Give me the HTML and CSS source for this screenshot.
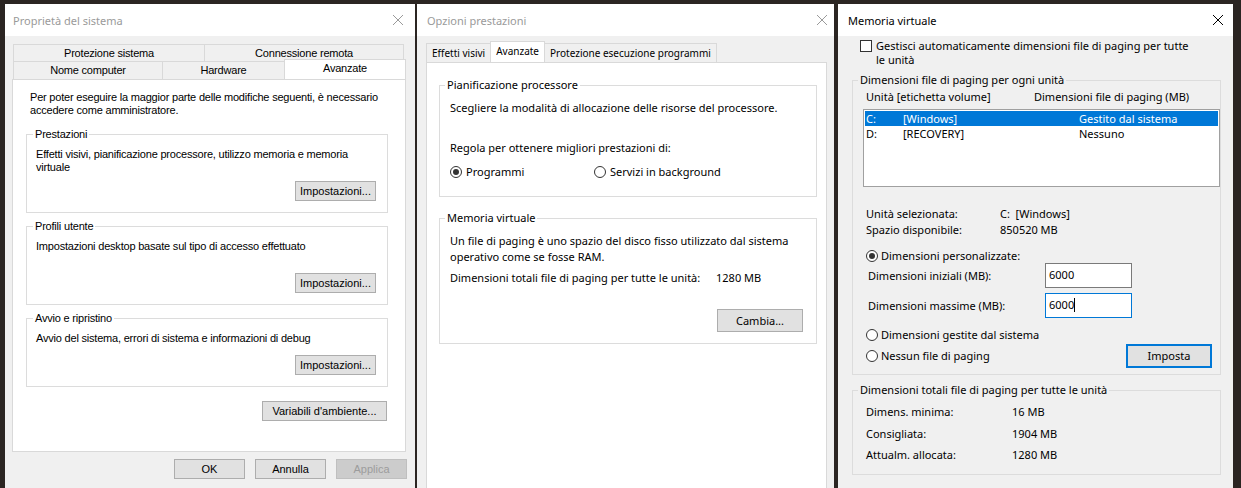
FILE: index.html
```html
<!DOCTYPE html>
<html lang="it">
  <head>
    <meta charset="UTF-8" />
    <title>Memoria virtuale</title>
    <link rel="stylesheet" href="styles.css">
  </head>
  <body>
    <div class="desktop">

      <!-- Proprietà del sistema -->
      <div class="window win-sys">
        <div class="titlebar">
          <span>Proprietà del sistema</span>
          <svg class="close" viewBox="0 0 10 10"><path d="M0 0L10 10M10 0L0 10" /></svg>
        </div>
        <div class="win-body">
          <div class="tab-row back">
            <div class="tab t-prot">Protezione sistema</div>
            <div class="tab t-conn">Connessione remota</div>
          </div>
          <div class="tab-row front">
            <div class="tab t-nome">Nome computer</div>
            <div class="tab t-hw">Hardware</div>
            <div class="tab t-adv sel">Avanzate</div>
          </div>
          <div class="panel">
            <p class="intro">Per poter eseguire la maggior parte delle modifiche seguenti, è necessario<br>accedere come amministratore.</p>

            <fieldset class="group">
              <legend>Prestazioni</legend>
              <p class="group-text">Effetti visivi, pianificazione processore, utilizzo memoria e memoria<br>virtuale</p>
              <div class="btn-row"><button class="btn btn-set">Impostazioni...</button></div>
            </fieldset>

            <fieldset class="group">
              <legend>Profili utente</legend>
              <p class="group-text">Impostazioni desktop basate sul tipo di accesso effettuato</p>
              <div class="btn-row"><button class="btn btn-set">Impostazioni...</button></div>
            </fieldset>

            <fieldset class="group">
              <legend>Avvio e ripristino</legend>
              <p class="group-text short">Avvio del sistema, errori di sistema e informazioni di debug</p>
              <div class="btn-row"><button class="btn btn-set">Impostazioni...</button></div>
            </fieldset>

            <div class="btn-row env-row"><button class="btn btn-env">Variabili d'ambiente...</button></div>
          </div>
          <div class="footer">
            <button class="btn btn-foot">OK</button>
            <button class="btn btn-foot">Annulla</button>
            <button class="btn btn-foot disabled">Applica</button>
          </div>
        </div>
      </div>

      <!-- Opzioni prestazioni -->
      <div class="window win-perf">
        <div class="titlebar">
          <span>Opzioni prestazioni</span>
          <svg class="close" viewBox="0 0 10 10"><path d="M0 0L10 10M10 0L0 10" /></svg>
        </div>
        <div class="win-body">
          <div class="tabs">
            <div class="tab">Effetti visivi</div>
            <div class="tab sel">Avanzate</div>
            <div class="tab">Protezione esecuzione programmi</div>
          </div>
          <div class="panel">
            <fieldset class="group">
              <legend>Pianificazione processore</legend>
              <p>Scegliere la modalità di allocazione delle risorse del processore.</p>
              <p class="adjust">Regola per ottenere migliori prestazioni di:</p>
              <div class="radio-row">
                <label class="opt first"><span class="radio on"></span>Programmi</label>
                <label class="opt"><span class="radio"></span>Servizi in background</label>
              </div>
            </fieldset>

            <fieldset class="group">
              <legend>Memoria virtuale</legend>
              <p>Un file di paging è uno spazio del disco fisso utilizzato dal sistema<br>operativo come se fosse RAM.</p>
              <p class="total"><span class="total-label">Dimensioni totali file di paging per tutte le unità:</span>1280 MB</p>
              <div class="btn-row"><button class="btn btn-change">Cambia...</button></div>
            </fieldset>
          </div>
        </div>
      </div>

      <!-- Memoria virtuale -->
      <div class="window win-vm">
        <div class="titlebar">
          <span>Memoria virtuale</span>
          <svg class="close" viewBox="0 0 10 10"><path d="M0 0L10 10M10 0L0 10" /></svg>
        </div>
        <div class="win-body">
          <label class="check-row">
            <span class="checkbox"></span>
            <span>Gestisci automaticamente dimensioni file di paging per tutte<br>le unità</span>
          </label>

          <fieldset class="group drives">
            <legend>Dimensioni file di paging per ogni unità</legend>
            <div class="list-head">
              <span class="col-drive">Unità [etichetta volume]</span>
              <span>Dimensioni file di paging (MB)</span>
            </div>
            <div class="listbox">
              <div class="list-row sel"><span class="c-letter">C:</span><span class="c-label">[Windows]</span><span>Gestito dal sistema</span></div>
              <div class="list-row"><span class="c-letter">D:</span><span class="c-label">[RECOVERY]</span><span>Nessuno</span></div>
            </div>

            <div class="info first"><span class="info-label">Unità selezionata:</span><span>C:&nbsp; [Windows]</span></div>
            <div class="info"><span class="info-label">Spazio disponibile:</span><span>850520 MB</span></div>

            <label class="opt custom"><span class="radio on"></span>Dimensioni personalizzate:</label>
            <div class="size-row first">
              <span class="size-label">Dimensioni iniziali (MB):</span>
              <span class="input">6000</span>
            </div>
            <div class="size-row">
              <span class="size-label">Dimensioni massime (MB):</span>
              <span class="input focus">6000<span class="caret"></span></span>
            </div>
            <label class="opt system"><span class="radio"></span>Dimensioni gestite dal sistema</label>
            <div class="set-row">
              <label class="opt"><span class="radio"></span>Nessun file di paging</label>
              <button class="btn btn-apply">Imposta</button>
            </div>
          </fieldset>

          <fieldset class="group totals">
            <legend>Dimensioni totali file di paging per tutte le unità</legend>
            <div class="total-row"><span class="total-name">Dimens. minima:</span><span>16 MB</span></div>
            <div class="total-row"><span class="total-name">Consigliata:</span><span>1904 MB</span></div>
            <div class="total-row"><span class="total-name">Attualm. allocata:</span><span>1280 MB</span></div>
          </fieldset>
        </div>
      </div>

    </div>
  </body>
</html>
```

FILE: styles.css
```css
* {
  box-sizing: border-box;
}
body {
  margin: 0;
  background: #2b2522;
  overflow: hidden;
  height: 488px;
}
p {
  margin: 0;
}
.desktop {
  display: flex;
  gap: 2px;
  height: 488px;
  padding: 4px 0 0 5px;
}

/* window chrome */
.window {
  background: #f0f0f0;
  display: flex;
  flex-direction: column;
  overflow: hidden;
}
.titlebar {
  flex: none;
  height: 32px;
  background: #fff;
  display: flex;
  align-items: center;
  justify-content: space-between;
  padding: 0 12px 0 8px;
  font: 11px "Noto Sans", sans-serif;
  color: #9a9a9a;
}
.close {
  width: 10px;
  height: 10px;
  stroke: #9a9a9a;
  stroke-width: 1;
  fill: none;
}
.win-body {
  flex: 1;
  display: flex;
  flex-direction: column;
}
.btn {
  height: 20px;
  padding: 0;
  background: #e1e1e1;
  border: 1px solid #adadad;
  color: #000;
  font: inherit;
}
.btn-row {
  display: flex;
  justify-content: flex-end;
}
fieldset.group {
  margin: 0;
  min-width: 0;
  border: 1px solid #dcdcdc;
}
legend {
  padding: 0 2px;
}
.radio {
  flex: none;
  width: 12px;
  height: 12px;
  border: 1px solid #333;
  border-radius: 50%;
  background: #fff;
  display: flex;
  align-items: center;
  justify-content: center;
}
.radio.on::after {
  content: "";
  width: 6px;
  height: 6px;
  border-radius: 50%;
  background: #333;
}
.opt {
  display: flex;
  align-items: center;
  gap: 4px;
}

/* Proprietà del sistema */
.win-sys {
  width: 410px;
}
.win-sys .titlebar {
  padding-right: 12px;
}
.win-sys .win-body {
  padding: 8px 9px 0 7px;
  font: 11px/13px "Liberation Sans", Arial, sans-serif;
  letter-spacing: -0.2px;
}
.tab-row {
  display: flex;
  margin-left: 1px;
}
.tab {
  background: #f0f0f0;
  border: 1px solid #d9d9d9;
  border-bottom: none;
  text-align: center;
  white-space: nowrap;
}
.tab + .tab {
  margin-left: -1px;
}
.tab-row.back .tab {
  height: 17px;
  line-height: 16px;
}
.tab-row.front .tab {
  height: 18px;
  line-height: 17px;
}
.tab.sel {
  background: #fff;
}
.tab-row.front .tab.sel {
  height: 20px;
  margin-top: -2px;
  line-height: 16px;
}
.t-prot { width: 192px; }
.t-conn { width: 200px; }
.t-nome { width: 150px; }
.t-hw { width: 123px; }
.t-adv { width: 122px; }
.win-sys .panel {
  height: 373px;
  background: #fff;
  border: 1px solid #d9d9d9;
  padding: 11px 17px 0 13px;
}
.intro {
  margin: 0 0 11px 4px;
}
.win-sys fieldset.group {
  padding: 7px 11px 11px 9px;
}
.win-sys fieldset.group + fieldset.group {
  margin-top: 7px;
}
.win-sys legend {
  margin-left: -3px;
}
.group-text {
  min-height: 26px;
  margin-bottom: 7px;
}
.group-text.short {
  min-height: 13px;
  margin-bottom: 10px;
}
.btn-set {
  width: 81px;
}
.env-row {
  margin: 14px 1px 0 0;
}
.btn-env {
  width: 125px;
}
.footer {
  display: flex;
  justify-content: flex-end;
  gap: 10px;
  padding-top: 7px;
  margin-right: -1px;
}
.btn-foot {
  width: 71px;
}
.btn-foot.disabled {
  background: #cccccc;
  border-color: #bfbfbf;
  color: #9c9c9c;
}

/* Opzioni prestazioni */
.win-perf {
  width: 417px;
  margin-right: 2px;
}
.win-perf .titlebar {
  padding-left: 10px;
  padding-right: 7px;
}
.win-perf .win-body {
  padding: 7px 7px 0 9px;
  font: 11px/16px "Noto Sans", sans-serif;
}
.tabs {
  flex: none;
  display: flex;
  align-items: flex-end;
  height: 19px;
}
.tabs .tab {
  height: 19px;
  line-height: 18px;
  padding: 0 5px;
  font-size: 10px;
}
.tabs .tab.sel {
  height: 21px;
  line-height: 19px;
}
.win-perf .panel {
  flex: 1;
  background: #fff;
  border: 1px solid #d9d9d9;
  border-bottom: none;
  padding: 14px 9px 0 12px;
}
.win-perf fieldset.group {
  padding: 7px 13px 16px 10px;
}
.win-perf fieldset.group + fieldset.group {
  margin-top: 13px;
  padding-bottom: 11px;
}
.win-perf legend {
  margin-left: -5px;
}
.adjust {
  margin-top: 24px;
}
.radio-row {
  display: flex;
  margin-top: 8px;
}
.opt.first {
  width: 144px;
}
.total {
  margin-top: 5px;
}
.total-label {
  display: inline-block;
  width: 266px;
}
.btn-change {
  width: 86px;
  height: 23px;
  margin-top: 23px;
}

/* Memoria virtuale */
.win-vm {
  width: 395px;
}
.win-vm .titlebar {
  color: #000;
  padding-left: 10px;
  padding-right: 10px;
}
.win-vm .close {
  stroke: #000;
}
.win-vm .win-body {
  padding: 3px 12px 0 14px;
  font: 11px/16px "Noto Sans", sans-serif;
}
.check-row {
  display: flex;
  gap: 4px;
  margin-left: 8px;
  line-height: 14px;
}
.checkbox {
  flex: none;
  width: 12px;
  height: 12px;
  margin-top: 1px;
  border: 1px solid #333;
  background: #fff;
}
.win-vm legend {
  margin-left: -5px;
}
.drives {
  margin-top: 5px !important;
  padding: 1px 0 6px 10px;
}
.list-head {
  display: flex;
  margin-left: 3px;
}
.col-drive {
  width: 168px;
}
.listbox {
  height: 78px;
  margin-top: 4px;
  background: #fff;
  border: 1px solid #a0a0a0;
  padding: 1px;
}
.list-row {
  display: flex;
  height: 15px;
  line-height: 15px;
  padding-left: 1px;
}
.list-row.sel {
  background: #0078d7;
  color: #fff;
}
.c-letter {
  width: 37px;
}
.c-label {
  width: 176px;
}
.info {
  display: flex;
  margin-left: 3px;
}
.info.first {
  margin-top: 19px;
}
.info-label {
  width: 134px;
}
.opt.custom {
  margin: 10px 0 0 3px;
  gap: 3px;
}
.size-row {
  display: flex;
  align-items: center;
  height: 25px;
  margin-top: 5px;
}
.size-row.first {
  margin-top: -1px;
}
.size-label {
  width: 182px;
  padding-left: 5px;
}
.input {
  width: 87px;
  height: 25px;
  border: 1px solid #7a7a7a;
  background: #fff;
  padding: 0 3px;
  line-height: 22px;
}
.input.focus {
  border-color: #0078d7;
}
.caret {
  display: inline-block;
  width: 1px;
  height: 14px;
  background: #000;
  vertical-align: -3px;
}
.opt.system {
  margin: 9px 0 0 3px;
  gap: 3px;
}
.set-row {
  display: flex;
  align-items: center;
  justify-content: space-between;
  height: 24px;
  margin: 1px 8px 0 3px;
}
.set-row .opt {
  gap: 3px;
}
.btn-apply {
  width: 86px;
  height: 24px;
  border-color: #0078d7;
  box-shadow: inset 0 0 0 1px #0078d7;
}
.totals {
  margin-top: 7px !important;
  padding: 3px 0 8px 13px;
}
.totals legend {
  margin-left: -8px;
}
.total-row {
  display: flex;
  line-height: 21.5px;
}
.total-name {
  width: 146px;
}
```
